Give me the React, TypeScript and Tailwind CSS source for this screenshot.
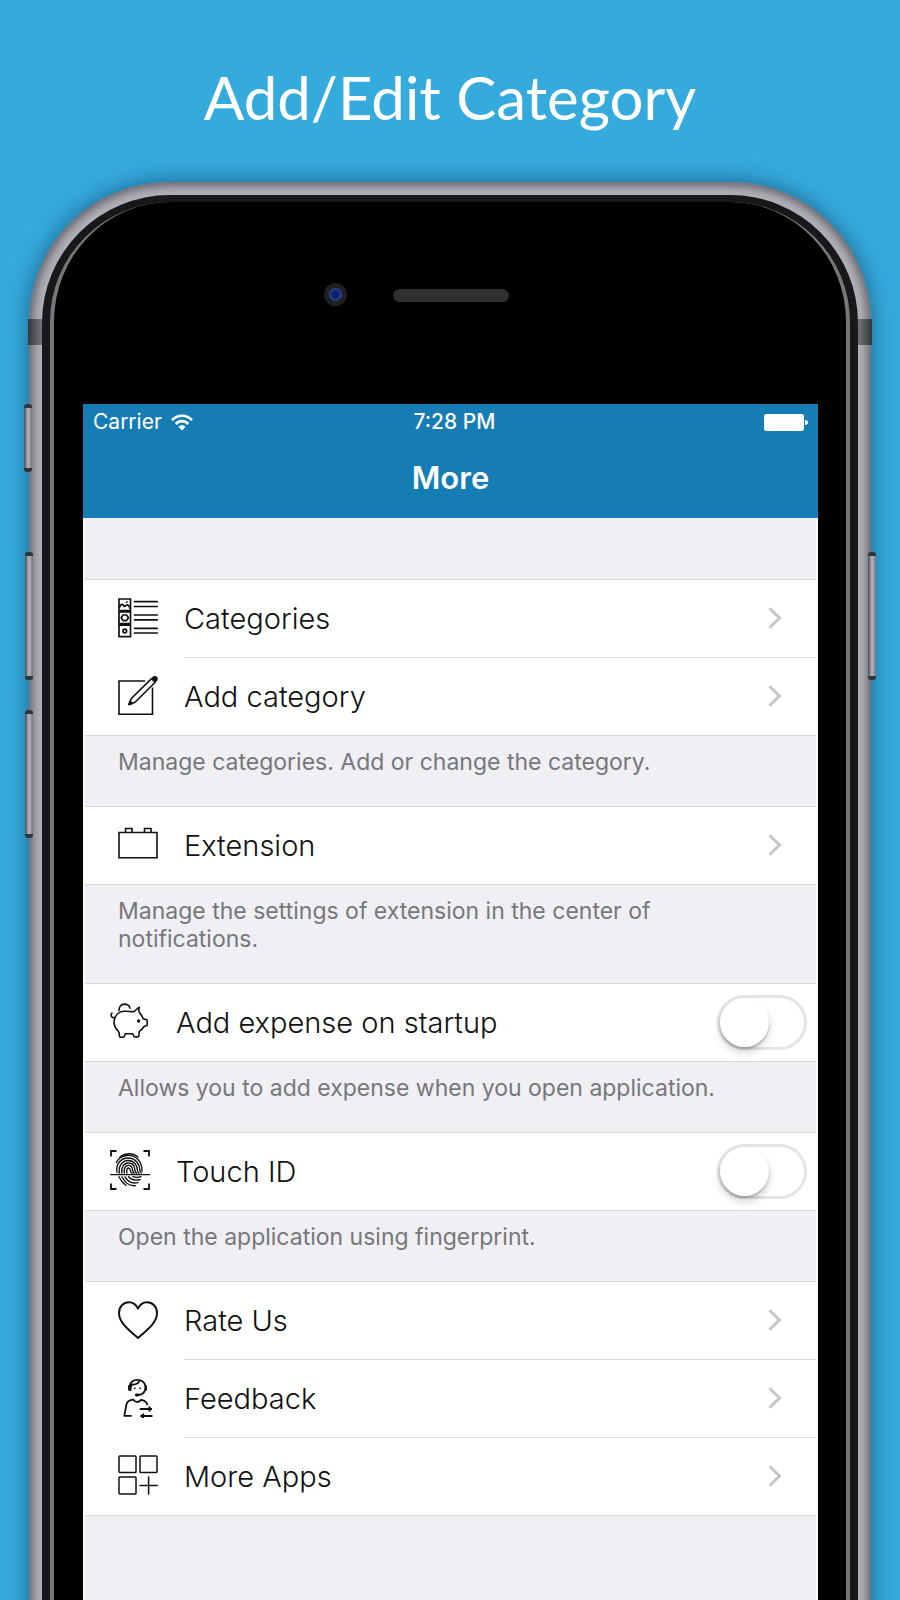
import type { ReactNode } from "react";

function Icon({ children, width = 1.3 }: { children: ReactNode; width?: number }) {
  return (
    <svg
      viewBox="0 0 40 40"
      className="mb-[3px] size-10 shrink-0"
      fill="none"
      stroke="#111"
      strokeWidth={width}
      strokeLinecap="round"
      strokeLinejoin="round"
      aria-hidden="true"
    >
      {children}
    </svg>
  );
}

const CategoriesIcon = () => (
  <Icon width={1.7}>
    <path strokeLinejoin="miter" d="M1 1h11.5v11.5H1zM1 14h11.5v11.5H1zM1 27.200h11.500v11.500H1z" />
    <path d="M1.500 9c1.500-3 3-3.500 4-1.500s2 0 3.500-.5 2 1 3 3M8.500 4h.5" />
    <path d="M5 17h3.500l2 2.800-2 2.800H5l-1.800-2.800z" />
    <circle cx="6.800" cy="33" r="1.800" />
    <path d="M16.500 3.700h22.800M16.500 8.500h22.800M16.500 17h22.800M16.500 21.800h22.800M16.500 30.300h22.800M16.500 35h22.800" />
  </Icon>
);

const ComposeIcon = () => (
  <Icon width={1.6}>
    <path strokeLinejoin="miter" strokeLinecap="butt" d="M27 6H1v33.300h33.500V12.500" />
    <path d="M11 29.500l2.300-6L33.500 3.600l3.700 3.600L17 27.200z" />
    <path fill="#111" d="M34.300 3.400c1.200-1.700 2.800-2.200 4-1.200 1.200 1.200.8 2.900-.8 4.200z" />
    <path fill="#111" d="M11 29.500l1-3.200 2.300 2.200z" />
  </Icon>
);

const ExtensionIcon = () => (
  <Icon width={1.6}>
    <path strokeLinejoin="miter" d="M1 8.500h38v25.300H1zM7.500 8.500v-4H14v4M26.500 8.500v-4H33v4" />
  </Icon>
);

const PiggyIcon = () => (
  <Icon width={1.600}>
    <path d="M4.300 19c1-5 5-8.300 9.500-8.700 4-.4 6.500.7 9.500.3 2.200-.3 3.200-3.200 6-4.300-.8 2.500-.6 4.300.5 5.800 1.600 1.800 2.500 3.400 3.500 5.800l3.700.8c.4 2 .4 3.700 0 5.800l-3 1c-1.200 2-2.500 3.500-4.600 4.800-.5 2-.2 3.800-.8 5.300-1.500.6-3 .6-4.500.2l-1.300-3.100h-7.500l-1.300 3.200c-1.500.4-3 .4-4.400-.2-.6-1.800.2-3.500-1.200-5.400C4.800 27 3.400 23.500 4.300 19z" />
    <path d="M9 9.600C9 6 11 3.200 14.400 3.100c2.800 0 4.900 1.500 5.600 4M2 12.200c-1.300 1-1.200 3.200.2 4 .7.500 1.400.5 2.200.3" />
    <circle cx="28.600" cy="20" r=".9" fill="#111" />
  </Icon>
);

const FingerprintIcon = () => (
  <Icon width={1.400}>
    <path
      strokeLinejoin="miter"
      strokeLinecap="butt"
      strokeWidth="1.800"
      d="M1 6.500V1h5.500M33.500 1H39v5.500M39 33.500V39h-5.500M6.500 39H1v-5.500"
    />
    <path strokeWidth="1.400" d="M.6 24.600h38.800" />
    <path d="M10 6.800c5.500-4 13-4.200 18 .3M6.300 12.500C10.500 4.300 22 3 28 9.500c3.500 3.500 4 8 4 11.500M7 22.500C5.500 14 11 8 18 8c7.500 0 11.500 6 11.800 11.500.2 2 .8 3 1.700 3.500M9.300 23c-1-7 3-12.500 9-12.500 5.500 0 8.700 4.500 9 9 .2 2 .8 3 1.700 3.800M11.800 23c-.8-5.500 2-10 6.500-10 4 0 6.200 3 6.500 6.500.2 2 1 3 1.700 3.800M14.300 23c-.8-4.500 1-7.600 4.200-7.600 2.600 0 3.700 2 4 4.200.2 1.800.7 2.800 1.700 3.700M17 23c-.8-3-.2-5 1.500-5 2.600 0 .8 3.500 3.500 5.300" />
    <path d="M9 26.800c1.500 3.500 4 6.500 7 8.500M12 26.800c2.500 5.500 7.500 9.500 13.500 8.800M15 26.800c2.500 4.500 7 7 13 5.800M18.500 26.800c2.700 3 6.500 4 11.500 2.800M23 26.700c2.500 1 5 1 8 0" />
  </Icon>
);

const HeartIcon = () => (
  <Icon width={2}>
    <path d="M20 8.500C18 4.300 15 2.200 11 2.200 5 2.200 1 7 1 13c0 9 8 15.500 19 25 11-9.500 19-16 19-25 0-6-4-10.800-10-10.800-4 0-7 2.100-9 6.300z" />
  </Icon>
);

const FeedbackIcon = () => (
  <Icon width={1.800}>
    <path d="M11.500 8C12.500 4 15.500 1.800 19.300 1.800S26.500 4 27.500 8M12.500 12c0-3 .3-4.500 1.500-5.500 4 .3 6.500-1 7.500-4M27 12c-.8 3-3 4.800-7 5" />
    <path strokeWidth="2.600" d="M11.300 8.500v3M27.700 8.500v3" />
    <path strokeWidth="2.800" d="M18.300 17h1.400" />
    <path d="M16.700 10.300h.1M22 10.300h.1" />
    <path d="M13 37.800H6.300L8.300 27c.5-3 3.500-5 7.200-5.300 1 1.700 2 2.300 3.700 2.300s2.800-.6 3.800-2.200c3 .3 5.300 2 6.300 4.500" />
    <path d="M22.500 31H33M23.500 38h10.300" />
    <path fill="#111" strokeWidth="1" d="M31.300 28.800l2.700 2.200-2.700 2.200zM25.300 35.800L22.500 38l2.800 2.200z" />
  </Icon>
);

const MoreAppsIcon = () => (
  <Icon width={1.500}>
    <rect x="1" y="1" width="17" height="16.500" rx=".8" />
    <rect x="22" y="1" width="17" height="16.500" rx=".8" />
    <rect x="1" y="22" width="17" height="17" rx=".8" />
    <path d="M22 30.500h17.300M30.600 22v17" />
  </Icon>
);

function LinkRow({ icon, label, divider }: { icon: ReactNode; label: string; divider?: boolean }) {
  return (
    <li>
      <a href="#" className={`flex items-center bg-white pl-[33px] ${divider ? "h-[78px]" : "h-[77px]"}`}>
        {icon}
        <span
          className={`ml-[26px] flex h-full flex-1 items-center justify-between pr-[34px] text-[29px] font-light text-[#111] ${
            divider ? "border-b border-[#dcdbdf]" : ""
          }`}
        >
          {label}
          <svg viewBox="0 0 14 22" className="mb-[2px] h-[22px] w-[14px]" fill="none" stroke="#c5c5ca" strokeWidth="3" aria-hidden="true">
            <path d="M1.500 1.200L11.500 11 1.500 20.800" />
          </svg>
        </span>
      </a>
    </li>
  );
}

function SwitchRow({ id, icon, label }: { id: string; icon: ReactNode; label: string }) {
  return (
    <li className="flex h-[77px] items-center bg-white pr-[9px] pl-[25px]">
      {icon}
      <label htmlFor={id} className="ml-[26px] flex-1 text-[29px] font-light text-[#111]">
        {label}
      </label>
      <input
        id={id}
        type="checkbox"
        role="switch"
        className="h-[55px] w-[90px] appearance-none rounded-full border-[3px] border-[#e5e5e5] bg-white before:block before:size-[49px] before:rounded-full before:bg-white before:shadow-[0_5px_8px_rgba(0,0,0,0.18),0_2px_2px_rgba(0,0,0,0.2)] checked:border-[#4cd964] checked:bg-[#4cd964] checked:before:translate-x-[35px]"
      />
    </li>
  );
}

function Group({ children, note }: { children: ReactNode; note?: string }) {
  return (
    <section>
      <ul className="border-y border-[#d9d9dd]">{children}</ul>
      {note && (
        <p className="pt-[12px] pr-[80px] pb-[30px] pl-[33px] text-[23px] leading-[28px] text-[#77777b]">{note}</p>
      )}
    </section>
  );
}

function StatusBar() {
  return (
    <div className="grid h-9 grid-cols-3 items-center px-[10px] text-[21px] text-white">
      <div className="flex items-center gap-[9px]">
        <span>Carrier</span>
        <svg viewBox="0 0 22 17" className="h-[17px] w-[22px]" fill="none" stroke="white" strokeWidth="2.600" aria-label="Wi-Fi">
          <path d="M1 6.200C6.500.2 15.500.2 21 6.200M4.800 10c3.500-3.800 8.900-3.800 12.400 0" />
          <path fill="white" stroke="none" d="M11 16.500l-3.600-3.800c2-2.100 5.200-2.100 7.200 0z" />
        </svg>
      </div>
      <span className="pl-2 text-center font-medium">7:28 PM</span>
      <svg viewBox="0 0 44 17" className="h-[17px] w-[44px] justify-self-end" fill="white" aria-label="Battery full">
        <rect width="40" height="17" rx="2.500" />
        <path d="M41 6c2 0 3 1 3 2.500S43 11 41 11z" />
      </svg>
    </div>
  );
}

const sideButton =
  "absolute w-[8px] rounded-[3px] border-y-4 border-[#33333a] bg-linear-to-r from-[#4b4b52] via-[#b9b7c2] to-[#77757f]";
const antenna = "absolute top-[137px] h-[26px] w-[14px]";

export default function App() {
  return (
    <main className="flex min-h-screen flex-col overflow-hidden bg-[#35aadd] font-['Inter','Liberation_Sans',sans-serif]">
      <h1 className="px-4 pt-[57px] pb-[45px] text-center font-['Lato',sans-serif] text-[60px] leading-[80px] text-white">
        Add/Edit Category
      </h1>

      <div className="relative mx-[29px] -mb-10 flex flex-1 flex-col">
        <div className="relative flex flex-1 flex-col rounded-t-[140px] bg-[#b0b0b7] p-[13px] shadow-[0_0_22px_rgba(0,40,70,0.55),inset_0_0_9px_4px_#66656e]">
          <span className={`${antenna} -left-px bg-linear-to-r from-[#34383d] to-[#74757a]`} />
          <span className={`${antenna} -right-px bg-linear-to-l from-[#34383d] to-[#74757a]`} />

          <div className="relative flex flex-1 flex-col rounded-t-[128px] bg-[#17181a] px-[8px] pt-[7px]">
            <div className="flex flex-1 flex-col rounded-t-[120px] border-x-4 border-[#77777a] bg-black pr-[28px] pl-[29px]">
              <div className="grid h-[202px] grid-cols-[1fr_auto_1fr] items-start pt-[81px]">
                <span className="mr-[46px] flex size-[23px] items-center justify-center justify-self-end rounded-full bg-[#1f1f22]">
                  <span className="size-[13px] rounded-full bg-radial from-[#0b1f6b] from-30% to-[#4565b4]" />
                </span>
                <span className="mt-[6px] h-[13px] w-[116px] rounded-full bg-[#2f2f30]" />
              </div>

              <div className="flex flex-1 flex-col bg-[#efeff4]">
                <header className="h-[114px] bg-[#167cb4]">
                  <StatusBar />
                  <h2 className="text-center text-[31px] leading-[76px] font-semibold text-white">More</h2>
                </header>
                <div className="flex-1 border-x-2 border-[#fafafc] pt-[61px]">
                  <Group note="Manage categories. Add or change the category.">
                    <LinkRow icon={<CategoriesIcon />} label="Categories" divider />
                    <LinkRow icon={<ComposeIcon />} label="Add category" />
                  </Group>
                  <Group note="Manage the settings of extension in the center of notifications.">
                    <LinkRow icon={<ExtensionIcon />} label="Extension" />
                  </Group>
                  <Group note="Allows you to add expense when you open application.">
                    <SwitchRow id="startup" icon={<PiggyIcon />} label="Add expense on startup" />
                  </Group>
                  <Group note="Open the application using fingerprint.">
                    <SwitchRow id="touch-id" icon={<FingerprintIcon />} label="Touch ID" />
                  </Group>
                  <Group>
                    <LinkRow icon={<HeartIcon />} label="Rate Us" divider />
                    <LinkRow icon={<FeedbackIcon />} label="Feedback" divider />
                    <LinkRow icon={<MoreAppsIcon />} label="More Apps" />
                  </Group>
                </div>
              </div>
            </div>
          </div>
        </div>

        <span className={`${sideButton} top-[222px] -left-[5px] h-[68px]`} />
        <span className={`${sideButton} top-[370px] -left-[4px] h-[128px]`} />
        <span className={`${sideButton} top-[528px] -left-[4px] h-[128px]`} />
        <span className={`${sideButton} top-[370px] -right-[5px] h-[128px]`} />
      </div>
    </main>
  );
}
